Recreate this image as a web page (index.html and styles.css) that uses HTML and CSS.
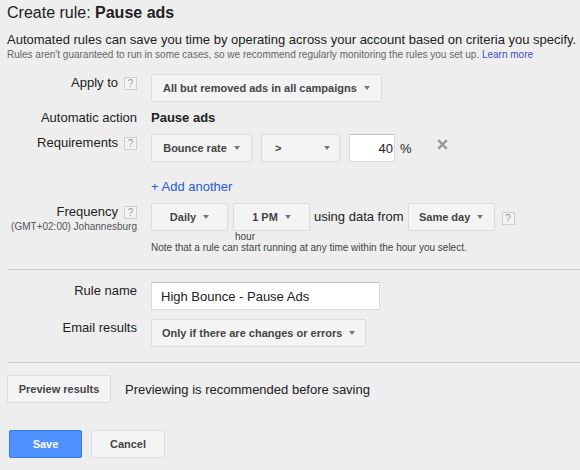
FILE: index.html
```html
<!DOCTYPE html>
<html>
<head>
<meta charset="utf-8">
<link rel="stylesheet" href="styles.css">
</head>
<body>
<div class="page">
  <h1 class="title">Create rule: <b>Pause ads</b></h1>
  <p class="intro">Automated rules can save you time by operating across your account based on criteria you specify.</p>
  <p class="note-small">Rules aren't guaranteed to run in some cases, so we recommend regularly monitoring the rules you set up. <a class="link" href="#">Learn more</a></p>

  <div class="row row-apply">
    <div class="label"><span>Apply to</span><span class="help">?</span></div>
    <div class="value"><span class="btn">All but removed ads in all campaigns<i class="caret"></i></span></div>
  </div>

  <div class="row row-action">
    <div class="label label-plain"><span>Automatic action</span></div>
    <div class="value"><b class="action">Pause ads</b></div>
  </div>

  <div class="row row-req">
    <div class="label"><span>Requirements</span><span class="help">?</span></div>
    <div class="value">
      <span class="btn btn-metric">Bounce rate<i class="caret"></i></span>
      <span class="btn btn-op">&gt;<i class="caret"></i></span>
      <span class="input input-num">40</span>
      <span class="pct">%</span>
      <svg class="remove" width="11" height="11" viewBox="0 0 11 11"><path d="M1.2 1.2L9.8 9.8M9.8 1.2L1.2 9.8" stroke="#9a9a9a" stroke-width="2.4"/></svg>
    </div>
  </div>

  <div class="row row-add">
    <div class="label"></div>
    <div class="value"><a class="add" href="#">+ Add another</a></div>
  </div>

  <div class="row row-freq">
    <div class="label label-stack">
      <div class="label-line"><span>Frequency</span><span class="help">?</span></div>
      <div class="tz">(GMT+02:00) Johannesburg</div>
    </div>
    <div class="value value-stack">
      <div class="freq-line">
        <span class="btn btn-daily">Daily<i class="caret"></i></span>
        <span class="hour-wrap">
          <span class="btn btn-hour">1 PM<i class="caret"></i></span>
          <span class="hour">hour</span>
        </span>
        <span class="using">using data from</span>
        <span class="btn btn-day">Same day<i class="caret"></i></span>
        <span class="help help-inline">?</span>
      </div>
      <div class="freq-note">Note that a rule can start running at any time within the hour you select.</div>
    </div>
  </div>

  <hr class="divider divider-1">

  <div class="row row-name">
    <div class="label label-plain"><span>Rule name</span></div>
    <div class="value"><span class="input input-name">High Bounce - Pause Ads</span></div>
  </div>

  <div class="row row-email">
    <div class="label label-plain"><span>Email results</span></div>
    <div class="value"><span class="btn btn-email">Only if there are changes or errors<i class="caret"></i></span></div>
  </div>

  <hr class="divider divider-2">

  <div class="preview-row">
    <span class="btn btn-preview">Preview results</span>
    <span class="preview-text">Previewing is recommended before saving</span>
  </div>

  <div class="actions">
    <span class="btn btn-save">Save</span>
    <span class="btn btn-cancel">Cancel</span>
  </div>
</div>
</body>
</html>
```

FILE: styles.css
```css
html, body {
  margin: 0;
  padding: 0;
  background: #eeeeee;
}
body {
  font-family: "Liberation Sans", Arial, sans-serif;
  color: #222;
  width: 580px;
  height: 470px;
  overflow: hidden;
}
.page {
  padding: 3px 0 0 7px;
}
.title {
  margin: 0;
  font-size: 16px;
  font-weight: normal;
  line-height: 20px;
  color: #222;
}
.title b { font-weight: bold; }
.intro {
  margin: 9px 0 0 0;
  font-size: 13px;
  line-height: 16px;
}
.note-small {
  margin: 0;
  font-size: 10px;
  line-height: 13px;
  color: #666;
}
.link { color: #3b4ecb; text-decoration: none; }

.row {
  display: grid;
  grid-template-columns: 130px auto;
  column-gap: 14px;
}
.label {
  display: flex;
  justify-content: flex-end;
  align-items: flex-start;
  font-size: 13px;
  line-height: 16px;
  padding-top: 1px;
}
.help {
  box-sizing: border-box;
  width: 13px;
  height: 13px;
  margin-left: 6px;
  margin-top: 2px;
  border: 1px solid #cfcfcf;
  background: #f3f3f3;
  color: #999;
  font-size: 10px;
  line-height: 11px;
  text-align: center;
  flex: none;
}
.value {
  display: flex;
  align-items: center;
}
.btn {
  box-sizing: border-box;
  display: inline-flex;
  align-items: center;
  justify-content: center;
  height: 28px;
  padding: 0 11px;
  border: 1px solid #dcdcdc;
  border-radius: 2px;
  background: #f4f4f4;
  color: #444;
  font-size: 11px;
  font-weight: bold;
  white-space: nowrap;
}
.caret {
  display: inline-block;
  width: 0;
  height: 0;
  margin-left: 7px;
  border-left: 3.5px solid transparent;
  border-right: 3.5px solid transparent;
  border-top: 4px solid #777;
}
.row-apply { margin-top: 13px; }
.row-action { margin-top: 7px; height: 18px; }
.action { font-size: 13px; line-height: 18px; }
.row-req { margin-top: 7px; }
.btn-metric { width: 101px; }
.btn-op { width: 79px; margin-left: 9px; justify-content: space-between; padding: 0 9px 0 13px; }
.input {
  box-sizing: border-box;
  display: inline-flex;
  align-items: center;
  height: 28px;
  background: #fff;
  border: 1px solid #d9d9d9;
  border-top-color: #c0c0c0;
  font-size: 13px;
  color: #222;
}
.input-num { width: 46px; margin-left: 9px; justify-content: flex-end; padding-right: 1px; }
.pct { font-size: 13px; margin-left: 5px; }
.remove { margin-left: 25px; margin-top: -8px; }

.row-add { margin-top: 17px; }
.add { color: #2a5bd7; text-decoration: none; font-size: 13px; line-height: 16px; }

.row-freq { margin-top: 8px; }
.label-stack {
  flex-direction: column;
  justify-content: flex-start;
  align-items: flex-end;
  padding-top: 0;
}
.label-line { display: flex; padding-top: 1px; }
.tz { font-size: 10px; line-height: 12px; color: #555; margin-top: 1px; }
.value-stack { flex-direction: column; align-items: flex-start; }
.freq-line { display: flex; align-items: flex-start; }
.btn-daily { width: 77px; }
.hour-wrap { display: flex; flex-direction: column; align-items: flex-start; margin-left: 5px; }
.btn-hour { width: 77px; }
.hour { font-size: 10px; line-height: 12px; color: #444; margin-left: 2px; }
.using { font-size: 13px; line-height: 28px; margin-left: 4px; }
.btn-day { margin-left: 4px; width: 87px; }
.help-inline { margin-left: 7px; margin-top: 9px; }
.freq-note { font-size: 10px; line-height: 12px; color: #444; margin-top: -1px; }

.divider {
  border: 0;
  border-top: 1px solid #cccccc;
  margin: 15px 0 0 0;
  height: 0;
}
.row-name { margin-top: 12px; }
.input-name { width: 229px; padding-left: 9px; }
.row-email { margin-top: 9px; }
.btn-email { padding: 0 10px; }
.divider-2 { margin-top: 15px; }

.preview-row {
  display: flex;
  align-items: center;
  margin-top: 12px;
}
.btn-preview { width: 104px; padding: 0; }
.preview-text { font-size: 13px; margin-left: 14px; }

.actions {
  display: flex;
  margin-top: 27px;
  margin-left: 2px;
  gap: 9px;
}
.btn-save {
  width: 73px;
  background: #4d90fe;
  border-color: #3079ed;
  color: #fff;
}
.btn-cancel { width: 74px; }
```
